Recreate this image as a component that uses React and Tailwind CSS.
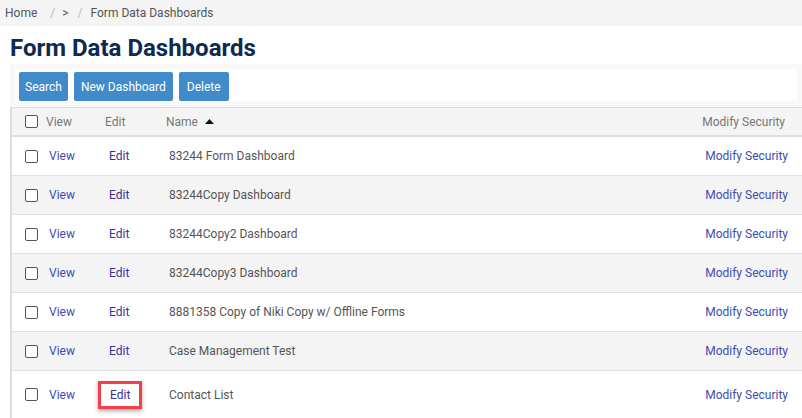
const rows = [
  "83244 Form Dashboard",
  "83244Copy Dashboard",
  "83244Copy2 Dashboard",
  "83244Copy3 Dashboard",
  "8881358 Copy of Niki Copy w/ Offline Forms",
  "Case Management Test",
  "Contact List",
];

function Checkbox() {
  return <span className="block w-[13px] h-[13px] rounded-[2px] border border-[#555] bg-white" />;
}

export default function App() {
  return (
    <div className="w-[802px] h-[418px] overflow-hidden bg-white font-['Roboto',sans-serif] text-[12px]">
      {/* breadcrumb */}
      <div className="h-[26px] bg-[#f4f4f4] flex items-center pl-[5px] text-[#555] text-[12px]">
        <span>Home</span>
        <span className="ml-[13px] text-[#bbb]">/</span>
        <span className="ml-[7px]">&gt;</span>
        <span className="ml-[9px] text-[#bbb]">/</span>
        <span className="ml-[8px]">Form Data Dashboards</span>
      </div>

      <h1 className="pl-[10px] pt-[7px] h-[38px] text-[24px] leading-[30px] font-bold text-[#0d2b52]">
        Form Data Dashboards
      </h1>

      {/* toolbar */}
      <div className="ml-[10px] border-[5px] border-[#f8f8f8] bg-white pl-[4px] pt-[3px] flex gap-[6px]">
        <button className="h-[29px] px-[6px] bg-[#428bca] text-white text-[12px] rounded-[2px]">Search</button>
        <button className="h-[29px] px-[7px] bg-[#428bca] text-white text-[12px] rounded-[2px]">New Dashboard</button>
        <button className="h-[29px] px-[8px] bg-[#428bca] text-white text-[12px] rounded-[2px]">Delete</button>
      </div>

      {/* table */}
      <div className="ml-[10px] mt-[1px] border-l-2 border-[#ddd]">
        <div className="h-[30px] border-t border-b-2 border-[#ddd] bg-[#f4f4f4] flex items-center text-[#777]">
          <div className="w-[34px] pl-[13px]"><Checkbox /></div>
          <div className="w-[59px]">View</div>
          <div className="w-[61px]">Edit</div>
          <div className="flex-1 flex items-center">
            Name
            <svg className="ml-[7px]" width="9" height="5" viewBox="0 0 9 5"><path d="M0 5 L4.5 0 L9 5 Z" fill="#111" /></svg>
          </div>
          <div className="pr-[17px]">Modify Security</div>
        </div>
        {rows.map((name, i) => {
          const last = i === rows.length - 1;
          return (
            <div
              key={name}
              className={
                "flex items-center border-b border-[#e2e2e2] " +
                (i % 2 === 1 ? "bg-[#f4f4f4] " : "bg-white ") +
                (last ? "h-[47px] border-b-0" : "h-[39px]")
              }
            >
              <div className="w-[37px] pl-[13px]"><Checkbox /></div>
              <div className="w-[60px] text-[#3b4db0]">View</div>
              {last ? (
                <div className="w-[71px] -ml-[11px]">
                  <span className="inline-block border-[3px] border-[#f0414a] px-[9px] py-[2px] text-[#3a2f96] shadow-[0_2px_4px_rgba(0,0,0,0.35)]">Edit</span>
                </div>
              ) : (
                <div className="w-[60px] text-[#3a2f96]">Edit</div>
              )}
              <div className="flex-1 text-[#555]">{name}</div>
              <div className="pr-[14px] text-[#3b4db0]">Modify Security</div>
            </div>
          );
        })}
      </div>
    </div>
  );
}
